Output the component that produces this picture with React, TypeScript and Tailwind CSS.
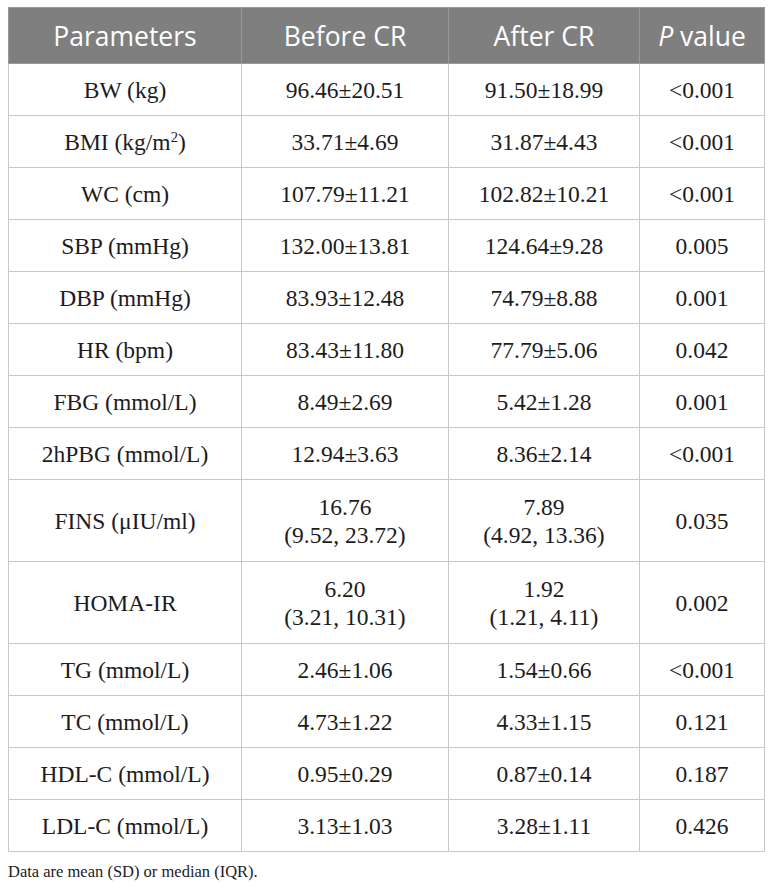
import React from 'react';

type Row = {
  param: React.ReactNode;
  before: string[];
  after: string[];
  p: string;
};

const rows: Row[] = [
  { param: 'BW (kg)', before: ['96.46±20.51'], after: ['91.50±18.99'], p: '<0.001' },
  {
    param: (
      <>
        BMI (kg/m<sup className="text-[0.62em]">2</sup>)
      </>
    ),
    before: ['33.71±4.69'],
    after: ['31.87±4.43'],
    p: '<0.001',
  },
  { param: 'WC (cm)', before: ['107.79±11.21'], after: ['102.82±10.21'], p: '<0.001' },
  { param: 'SBP (mmHg)', before: ['132.00±13.81'], after: ['124.64±9.28'], p: '0.005' },
  { param: 'DBP (mmHg)', before: ['83.93±12.48'], after: ['74.79±8.88'], p: '0.001' },
  { param: 'HR (bpm)', before: ['83.43±11.80'], after: ['77.79±5.06'], p: '0.042' },
  { param: 'FBG (mmol/L)', before: ['8.49±2.69'], after: ['5.42±1.28'], p: '0.001' },
  { param: '2hPBG (mmol/L)', before: ['12.94±3.63'], after: ['8.36±2.14'], p: '<0.001' },
  { param: 'FINS (μIU/ml)', before: ['16.76', '(9.52, 23.72)'], after: ['7.89', '(4.92, 13.36)'], p: '0.035' },
  { param: 'HOMA-IR', before: ['6.20', '(3.21, 10.31)'], after: ['1.92', '(1.21, 4.11)'], p: '0.002' },
  { param: 'TG (mmol/L)', before: ['2.46±1.06'], after: ['1.54±0.66'], p: '<0.001' },
  { param: 'TC (mmol/L)', before: ['4.73±1.22'], after: ['4.33±1.15'], p: '0.121' },
  { param: 'HDL-C (mmol/L)', before: ['0.95±0.29'], after: ['0.87±0.14'], p: '0.187' },
  { param: 'LDL-C (mmol/L)', before: ['3.13±1.03'], after: ['3.28±1.11'], p: '0.426' },
];

const Lines: React.FC<{ lines: string[] }> = ({ lines }) => (
  <>
    {lines.map((l, i) => (
      <div key={i}>{l}</div>
    ))}
  </>
);

const App: React.FC = () => {
  const cell = 'border border-[#c8c8c8] text-center align-middle px-2';
  const head = 'border border-[#9a9a9a] text-center align-middle font-normal px-2';

  return (
    <div className="w-[772px] h-[891px] bg-white pt-[7px] pl-[8px]">
      <table className="table-fixed w-[756px] border-collapse border border-[#c8c8c8] font-['Liberation_Serif',serif] text-[23.5px] leading-[28px] text-[#1c1c1c]">
        <colgroup>
          <col className="w-[233px]" />
          <col className="w-[207px]" />
          <col className="w-[191px]" />
          <col className="w-[125px]" />
        </colgroup>
        <thead>
          <tr className="h-[56px] bg-[#7f7f7f] text-white font-['Open_Sans',sans-serif] text-[26.5px] leading-[32px]">
            <th className={head}>Parameters</th>
            <th className={head}>Before CR</th>
            <th className={head}>After CR</th>
            <th className={head}>
              <i>P</i> value
            </th>
          </tr>
        </thead>
        <tbody>
          {rows.map((r, i) => (
            <tr key={i} className={r.before.length > 1 ? 'h-[82px]' : 'h-[52px]'}>
              <td className={cell}>{r.param}</td>
              <td className={cell}>
                <Lines lines={r.before} />
              </td>
              <td className={cell}>
                <Lines lines={r.after} />
              </td>
              <td className={cell}>{r.p}</td>
            </tr>
          ))}
        </tbody>
      </table>
      <p className="mt-[8px] font-['Liberation_Serif',serif] text-[16.5px] leading-[24px] text-[#1c1c1c]">
        Data are mean (SD) or median (IQR).
      </p>
    </div>
  );
};

export default App;
